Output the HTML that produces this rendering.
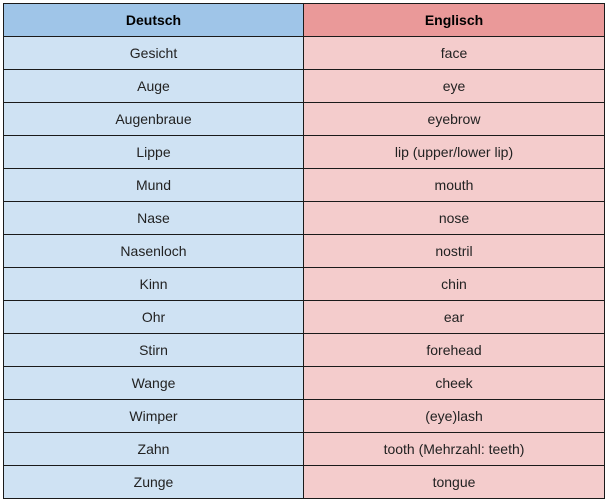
<!DOCTYPE html>
<html><head><style>
body{margin:0;background:#fff;width:608px;height:502px;overflow:hidden}
table{position:absolute;left:3px;top:3px;border-collapse:collapse;font-family:"Liberation Sans",Arial,sans-serif;font-size:14px;color:#222}
td,th{border:1px solid #1a1a1a;height:32px;padding:0;text-align:center}
td:first-child,th:first-child{width:299px;background:#cfe2f3}
td:last-child,th:last-child{width:300px;background:#f4cccc}
th:first-child{background:#9fc5e8}
th:last-child{background:#ea9999}
th{font-weight:bold;color:#000}
</style></head><body>
<table>
<tr><th>Deutsch</th><th>Englisch</th></tr>
<tr><td>Gesicht</td><td>face</td></tr>
<tr><td>Auge</td><td>eye</td></tr>
<tr><td>Augenbraue</td><td>eyebrow</td></tr>
<tr><td>Lippe</td><td>lip (upper/lower lip)</td></tr>
<tr><td>Mund</td><td>mouth</td></tr>
<tr><td>Nase</td><td>nose</td></tr>
<tr><td>Nasenloch</td><td>nostril</td></tr>
<tr><td>Kinn</td><td>chin</td></tr>
<tr><td>Ohr</td><td>ear</td></tr>
<tr><td>Stirn</td><td>forehead</td></tr>
<tr><td>Wange</td><td>cheek</td></tr>
<tr><td>Wimper</td><td>(eye)lash</td></tr>
<tr><td>Zahn</td><td>tooth (Mehrzahl: teeth)</td></tr>
<tr><td>Zunge</td><td>tongue</td></tr>
</table>
</body></html>
